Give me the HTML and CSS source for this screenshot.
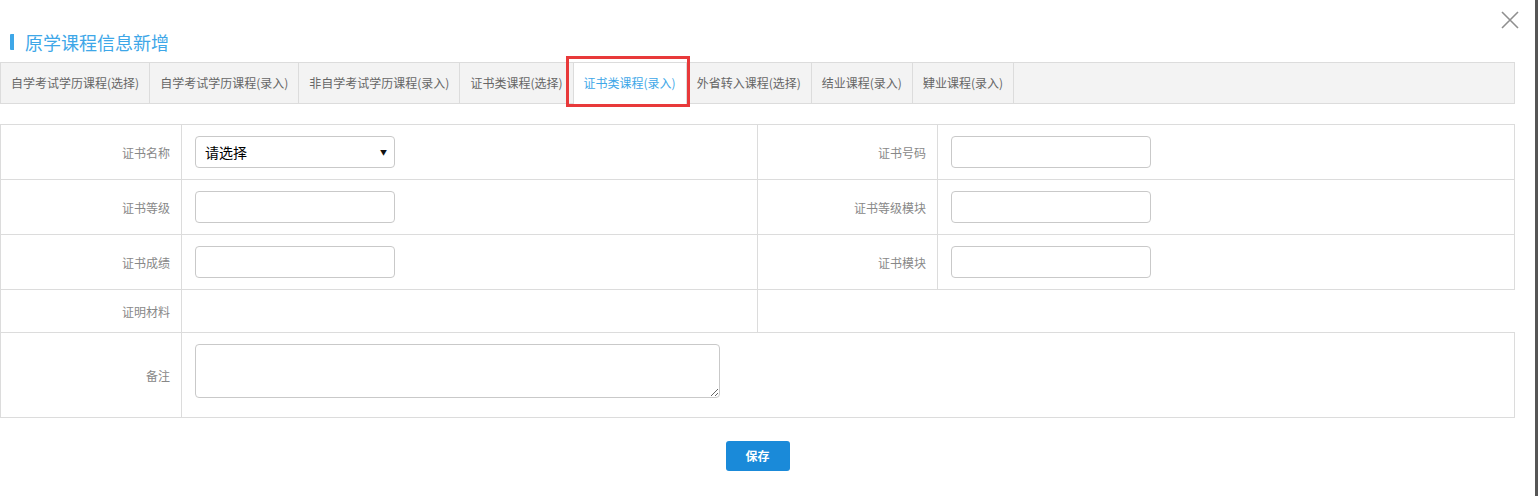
FILE: index.html
```html
<!doctype html>
<html lang="zh-CN">
<head>
<meta charset="UTF-8" />
<title>原学课程信息新增</title>
<link rel="stylesheet" href="styles.css">
</head>
<body>
<div class="layer">
	<div class="main">
		<a class="close" href="javascript:;">
			<svg width="18" height="18" viewBox="0 0 18 18"><path d="M1 1L17 17M17 1L1 17" stroke="#8f8f8f" stroke-width="1.6" fill="none"/></svg>
		</a>
		<h3 class="title">原学课程信息新增</h3>
		<ul class="tabs">
			<li>自学考试学历课程(选择)</li>
			<li>自学考试学历课程(录入)</li>
			<li>非自学考试学历课程(录入)</li>
			<li>证书类课程(选择)</li>
			<li class="active">证书类课程(录入)</li>
			<li>外省转入课程(选择)</li>
			<li>结业课程(录入)</li>
			<li>肄业课程(录入)</li>
		</ul>
		<table class="form">
			<colgroup>
				<col style="width:181px">
				<col style="width:576px">
				<col style="width:180px">
				<col>
			</colgroup>
			<tr>
				<td class="label">证书名称</td>
				<td>
					<span class="sel">
						<select><option>请选择</option></select>
						<i>▼</i>
					</span>
				</td>
				<td class="label">证书号码</td>
				<td><input type="text"></td>
			</tr>
			<tr>
				<td class="label">证书等级</td>
				<td><input type="text"></td>
				<td class="label">证书等级模块</td>
				<td><input type="text"></td>
			</tr>
			<tr>
				<td class="label">证书成绩</td>
				<td><input type="text"></td>
				<td class="label">证书模块</td>
				<td><input type="text"></td>
			</tr>
			<tr class="short">
				<td class="label">证明材料</td>
				<td></td>
			</tr>
			<tr class="tall">
				<td class="label">备注</td>
				<td colspan="3" class="top"><textarea></textarea></td>
			</tr>
		</table>
		<div class="btns"><a class="btn" href="javascript:;">保存</a></div>
	</div>
	<div class="edge"></div>
</div>
</body>
</html>
```

FILE: styles.css
```css
html,body,ul,h3{margin:0;padding:0;}
li{list-style:none;}
a{text-decoration:none;}

body{
	background:#fff;
	font-family:"Noto Sans CJK SC","Liberation Sans",sans-serif;
	font-size:12px;
	color:#666;
}

.layer{
	display:flex;
	height:496px;
	overflow:hidden;
}
.main{
	flex:1;
	position:relative;
	padding-right:20px;
}
.edge{
	width:3px;
	background:#565656;
}

.close{
	position:absolute;
	top:11px;
	right:16px;
	width:18px;
	height:18px;
}

.title{
	margin:34px 0 0 10px;
	padding-left:11px;
	border-left:4px solid #3ea7e8;
	border-radius:1px;
	height:16px;
	line-height:16px;
	font-size:18px;
	font-weight:normal;
	color:#3ea7e8;
}

.tabs{
	display:flex;
	height:40px;
	background:#f3f3f3;
	border:1px solid #dcdcdc;
	margin-top:12px;
}
.tabs li{
	line-height:40px;
	padding:0 10px;
	border-right:1px solid #dcdcdc;
	white-space:nowrap;
	color:#666;
}
.tabs li.active{
	position:relative;
	background:#fff;
	color:#3ea7e8;
	padding:0 10px;
	height:41px;
}
.tabs li.active::after{
	content:"";
	position:absolute;
	top:-7px;
	left:-8px;
	right:-4px;
	bottom:-3px;
	border:3px solid #e8393a;
}

.form{
	margin-top:20px;
	width:100%;
	border-collapse:collapse;
	table-layout:fixed;
}
.form td{
	border:1px solid #dcdcdc;
	height:54px;
	padding:0 13px;
	vertical-align:middle;
}
.form td.label{
	text-align:right;
	color:#888;
	padding-right:11px;
}
.form tr.short td{height:42px;}
.form tr.tall td{height:84px;}
.form tr.tall td.top{
	vertical-align:top;
	padding-top:11px;
	height:73px;
}

.form input,
.form select{
	box-sizing:border-box;
	width:200px;
	height:32px;
	border:1px solid #c9c9c9;
	border-radius:4px;
	background:#fff;
	font-family:inherit;
	font-size:14px;
	color:#000;
	margin:0;
	padding:0 9px;
	outline:none;
}
.form select{
	-webkit-appearance:none;
	appearance:none;
	display:block;
}
.sel{
	position:relative;
	display:inline-block;
}
.sel i{
	position:absolute;
	right:8px;
	top:11px;
	font-style:normal;
	font-size:7px;
	color:#111;
	pointer-events:none;
}
.form textarea{
	display:block;
	box-sizing:border-box;
	width:525px;
	height:54px;
	border:1px solid #c9c9c9;
	border-radius:4px;
	margin:0;
}

.btns{
	text-align:center;
	margin-top:23px;
}
.btn{
	display:inline-block;
	width:64px;
	height:30px;
	line-height:30px;
	background:#1a8ad9;
	border-radius:3px;
	color:#fff;
	font-weight:bold;
	font-size:12px;
}
```
